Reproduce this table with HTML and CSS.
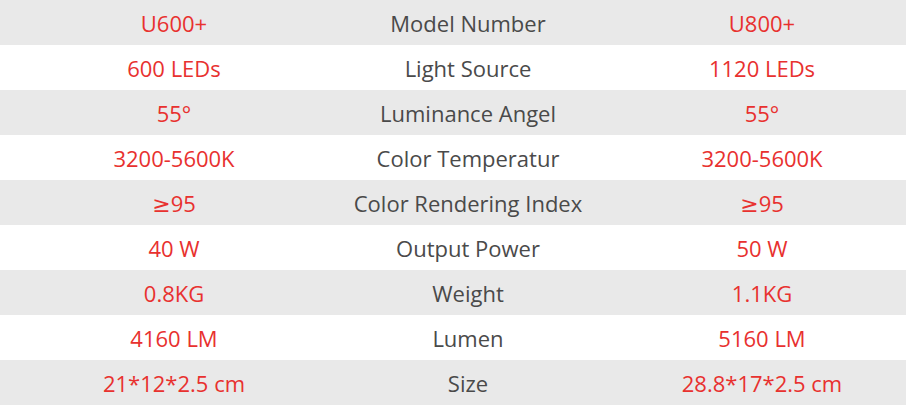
FILE: index.html
```html
<!DOCTYPE html>
<html>
<head>
<meta charset="utf-8">
<link rel="stylesheet" href="styles.css">
</head>
<body>
<div class="spec">
  <div class="row"><span class="val">U600+</span><span class="label">Model Number</span><span class="val">U800+</span></div>
  <div class="row"><span class="val">600 LEDs</span><span class="label">Light Source</span><span class="val">1120 LEDs</span></div>
  <div class="row"><span class="val">55°</span><span class="label">Luminance Angel</span><span class="val">55°</span></div>
  <div class="row"><span class="val">3200-5600K</span><span class="label">Color Temperatur</span><span class="val">3200-5600K</span></div>
  <div class="row"><span class="val"><span class="sym">≥</span>95</span><span class="label">Color Rendering Index</span><span class="val"><span class="sym">≥</span>95</span></div>
  <div class="row"><span class="val">40 W</span><span class="label">Output Power</span><span class="val">50 W</span></div>
  <div class="row"><span class="val">0.8KG</span><span class="label">Weight</span><span class="val">1.1KG</span></div>
  <div class="row"><span class="val">4160 LM</span><span class="label">Lumen</span><span class="val">5160 LM</span></div>
  <div class="row"><span class="val">21*12*2.5 cm</span><span class="label">Size</span><span class="val">28.8*17*2.5 cm</span></div>
</div>
</body>
</html>
```

FILE: styles.css
```css
html, body {
  margin: 0;
  padding: 0;
  background: #ffffff;
  overflow: hidden;
}
.spec {
  display: flex;
  flex-direction: column;
  font-family: "Open Sans", "Noto Sans", sans-serif;
  font-size: 22px;
}
.row {
  display: grid;
  grid-template-columns: 294px 294px 294px;
  padding-left: 27px;
  height: 45px;
  align-items: center;
}
.row:nth-child(odd) {
  background: #e9e9e9;
}
.val {
  text-align: center;
  color: #e8312f;
  font-weight: 500;
}
.sym {
  font-family: "DejaVu Sans", sans-serif;
  font-weight: 400;
}
.label {
  text-align: center;
  color: #4a4a4a;
}
```
